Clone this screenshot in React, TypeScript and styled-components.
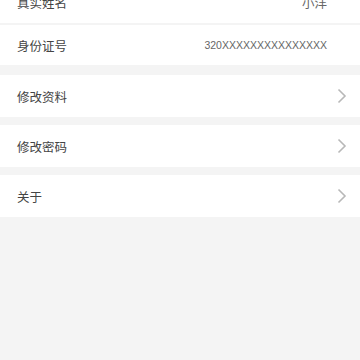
import React from 'react'
import styled, { createGlobalStyle } from 'styled-components'

const GlobalStyle = createGlobalStyle`
  html, body {
    margin: 0;
    padding: 0;
    background: #f4f4f4;
    font-family: "Noto Sans CJK SC", "Liberation Sans", sans-serif;
  }
`

const Page = styled.div`
  width: 360px;
  height: 360px;
  overflow: hidden;
  background: #f4f4f4;
`

const List = styled.div`
  display: flex;
  flex-direction: column;
  margin-top: -19px;
`

const Group = styled.div<{ $gap: number }>`
  display: flex;
  flex-direction: column;
  gap: 2px;
  margin-bottom: ${p => p.$gap}px;
`

const Row = styled.div<{ $h: number }>`
  height: ${p => p.$h}px;
  background: #fff;
  display: flex;
  align-items: center;
  padding: 0 13px 0 17px;
`

const Label = styled.span`
  flex: 1;
  font-size: 12.5px;
  color: #444;
`

const Value = styled.span<{ $latin?: boolean }>`
  margin-right: 20px;
  font-size: ${p => (p.$latin ? '10.5px' : '12.5px')};
  font-family: ${p => (p.$latin ? '"Liberation Sans", sans-serif' : 'inherit')};
  color: #666;
`

const Chevron = () => (
  <svg width="10" height="16" viewBox="0 0 10 16">
    <path d="M1.5 1.5 L8 8 L1.5 14.5" fill="none" stroke="#b8b8b8" strokeWidth="1.6" />
  </svg>
)

export default function App() {
  return (
    <Page>
      <GlobalStyle />
      <List>
        <Group $gap={10}>
          <Row $h={42}>
            <Label>真实姓名</Label>
            <Value>小洋</Value>
          </Row>
          <Row $h={40}>
            <Label>身份证号</Label>
            <Value $latin>320XXXXXXXXXXXXXXX</Value>
          </Row>
        </Group>
        <Group $gap={8}>
          <Row $h={42}>
            <Label>修改资料</Label>
            <Chevron />
          </Row>
        </Group>
        <Group $gap={8}>
          <Row $h={42}>
            <Label>修改密码</Label>
            <Chevron />
          </Row>
        </Group>
        <Group $gap={8}>
          <Row $h={42}>
            <Label>关于</Label>
            <Chevron />
          </Row>
        </Group>
      </List>
    </Page>
  )
}
